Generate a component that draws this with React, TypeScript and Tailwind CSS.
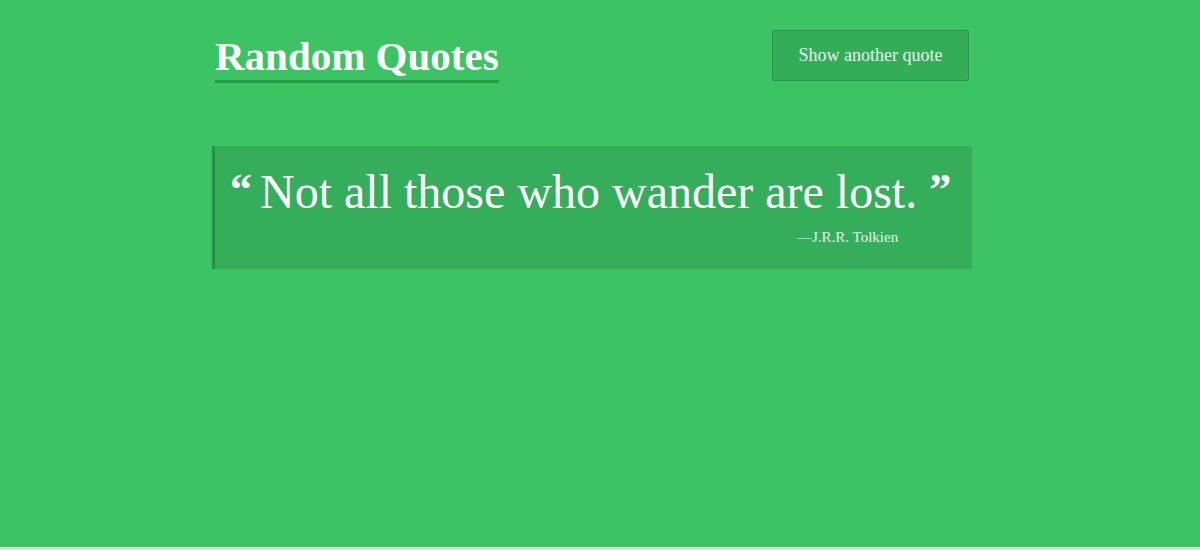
export default function App() {
  return (
    <div className="w-full h-[550px] bg-[#dcdcd8]" style={{ fontFamily: '"Liberation Serif", serif' }}>
      <div className="h-[547px] bg-[#3cc364] text-white">
        <div className="w-[776px] ml-[212px]">
          <header className="flex items-start justify-between pt-[30px] w-[757px]">
            <h1 className="ml-[3px] mt-[4px] text-[41px] leading-[44px] font-bold text-white border-b-[3px] border-[#2a9a4b] pb-[2px]">
              Random Quotes
            </h1>
            <button className="w-[197px] h-[51px] bg-[#33ad58] border border-[#2a9249] rounded-[2px] text-[18px] text-[#eaf7ec]">
              Show another quote
            </button>
          </header>

          <blockquote className="mt-[63px] w-[760px] h-[123px] bg-[#34ae5a] border-l-[3px] border-[#2b8c46] rounded-r-[3px] pl-[15px] pt-[20px]">
            <p className="flex items-start text-[48px] leading-[52px]">
              <span className="text-[44px] leading-[40px] font-bold mr-[8px] mt-[4px]">&ldquo;</span>
              <span>Not all those who wander are lost.</span>
              <span className="text-[44px] leading-[40px] font-bold ml-[12px] mt-[4px]">&rdquo;</span>
            </p>
            <p className="mt-[8px] pl-[567px] text-[15px] text-[#eaf7ec]">&mdash;J.R.R. Tolkien</p>
          </blockquote>
        </div>
      </div>
    </div>
  );
}
